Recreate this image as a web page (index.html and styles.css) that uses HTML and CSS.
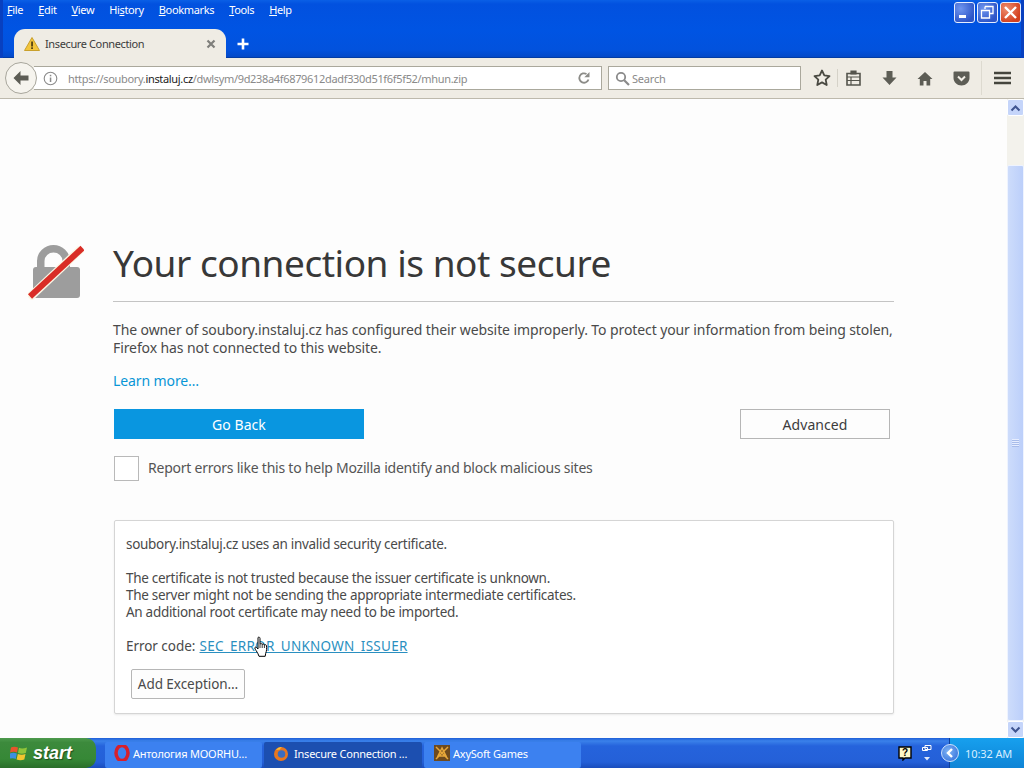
FILE: index.html
```html
<!DOCTYPE html>
<html lang="en">
<head>
<meta charset="utf-8">
<title>Insecure Connection</title>
<link rel="stylesheet" href="styles.css">
</head>
<body>
<div class="screen">
  <header class="titlebar">
    <div class="menu-row">
      <nav class="menus">
        <span><u>F</u>ile</span><span><u>E</u>dit</span><span><u>V</u>iew</span><span>Hi<u>s</u>tory</span><span><u>B</u>ookmarks</span><span><u>T</u>ools</span><span><u>H</u>elp</span>
      </nav>
      <div class="winbtns">
        <div class="winbtn"><svg width="21" height="21" viewBox="0 0 21 21"><rect x="5" y="13" width="7" height="3" fill="#fff"/></svg></div>
        <div class="winbtn"><svg width="21" height="21" viewBox="0 0 21 21"><path d="M8 4.500h8v7h-3M4.500 8.500h8v7.500h-8z M8 7V4.500" fill="none" stroke="#fff" stroke-width="1.300"/></svg></div>
        <div class="winbtn close"><svg width="21" height="21" viewBox="0 0 21 21"><path d="M5 5l11 11M16 5L5 16" stroke="#fff" stroke-width="2.400"/></svg></div>
      </div>
    </div>
    <div class="tab-row">
      <div class="tab">
        <svg class="warn" width="16" height="14" viewBox="0 0 16 14"><path d="M8 .5L15.500 13.500H.5z" fill="#f2c53d" stroke="#c9a02c"/><rect x="7.200" y="4.500" width="1.700" height="5" fill="#4a3a10"/><rect x="7.200" y="10.300" width="1.700" height="1.700" fill="#4a3a10"/></svg>
        <span class="tab-title">Insecure Connection</span>
        <svg class="tab-x" width="10" height="10" viewBox="0 0 10 10"><path d="M1.500 1.500l7 7M8.500 1.500l-7 7" stroke="#7f7f7b" stroke-width="2.200"/></svg>
      </div>
      <svg class="newtab" width="12" height="12" viewBox="0 0 12 12"><path d="M6 .5v11M.5 6h11" stroke="#fff" stroke-width="2.600"/></svg>
    </div>
  </header>

  <div class="toolbar">
    <div class="back"><svg width="18" height="16" viewBox="0 0 18 16"><path d="M8.500 1L1.500 8l7 7V10.500h8v-5h-8z" fill="#5d5d55"/></svg></div>
    <div class="urlbar">
      <svg class="info" width="15" height="15" viewBox="0 0 15 15"><circle cx="7.500" cy="7.500" r="6.300" fill="none" stroke="#8a8a8a" stroke-width="1.100"/><rect x="6.800" y="6.500" width="1.500" height="4.500" fill="#8a8a8a"/><rect x="6.800" y="3.800" width="1.500" height="1.500" fill="#8a8a8a"/></svg>
      <div class="url"><span class="dim">https://soubory.</span>instaluj.cz<span class="dim">/dwlsym/9d238a4f6879612dadf330d51f6f5f52/mhun.zip</span></div>
      <div class="reload"><svg width="14" height="14" viewBox="0 0 14 14"><path d="M11.500 8.500A4.700 4.700 0 1 1 9.500 3" fill="none" stroke="#8c8c88" stroke-width="1.800"/><path d="M12.500 1v5.200H7.300z" fill="#8c8c88"/></svg></div>
    </div>
    <div class="searchbar">
      <svg width="15" height="15" viewBox="0 0 15 15"><circle cx="6" cy="6" r="4.200" fill="none" stroke="#8a8a8a" stroke-width="1.800"/><path d="M9.200 9.200l4.800 4.800" stroke="#8a8a8a" stroke-width="2.200"/></svg>
      <span>Search</span>
    </div>
    <div class="tools">
      <div class="star-wrap"><svg width="18" height="17" viewBox="0 0 18 17"><path d="M9 1.500l2.300 4.900 5.200.7-3.800 3.600 1 5.300L9 13.400 4.300 16l1-5.300L1.500 7.100l5.200-.7z" fill="none" stroke="#4a4a42" stroke-width="1.800" stroke-linejoin="round"/></svg></div>
      <div class="tool first"><svg width="15" height="16" viewBox="0 0 15 16"><path d="M1 3.500h13v11.500H1z" fill="none" stroke="#55554d" stroke-width="1.600"/><path d="M5 1h5v3H5zM1 7h13M1 10.500h13M5 7v8" fill="#55554d" stroke="#55554d" stroke-width="1.200"/></svg></div>
      <div class="tool"><svg width="15" height="16" viewBox="0 0 15 16"><path d="M4.500 1h6v6.500h4L7.500 15 .5 7.500h4z" fill="#5d5d55"/></svg></div>
      <div class="tool"><svg width="16" height="15" viewBox="0 0 16 15"><path d="M8 1L.5 8h2.300v6.500h3.700V10h3v4.500h3.700V8h2.300z" fill="#5d5d55"/></svg></div>
      <div class="tool"><svg width="17" height="15" viewBox="0 0 17 15"><path d="M1.500.5h14A1 1 0 0 1 16.500 1.500v5.500c0 4-3.700 7.500-8 7.500s-8-3.500-8-7.500V1.500A1 1 0 0 1 1.500.5z" fill="#5d5d55"/><path d="M5 5.500l3.500 3.500L12 5.500" fill="none" stroke="#f1eee6" stroke-width="2"/></svg></div>
      <div class="tool hamburger"><svg width="17" height="14" viewBox="0 0 17 14"><path d="M0 2h17M0 7h17M0 12h17" stroke="#45453d" stroke-width="2.500"/></svg></div>
    </div>
  </div>

  <div class="viewport">
    <main class="page">
      <div class="error">
        <svg class="lock" width="56" height="56" viewBox="0 0 56 56"><path d="M9 26v-9a16.500 16 0 0 1 33 0v9h-7.500v-9a9 8.500 0 0 0-18 0v9z" fill="#9d9d9d"/><rect x="5" y="23" width="47" height="31" rx="3" fill="#9d9d9d"/><path d="M1 54L53 5" stroke="#fbf6e4" stroke-width="8.500"/><path d="M2 52.500L54.500 4" stroke="#d92d26" stroke-width="6"/></svg>
        <div class="body">
          <h1>Your connection is not secure</h1>
          <p class="desc">The owner of soubory.instaluj.cz has configured their website improperly. To protect your information from being stolen, Firefox has not connected to this website.</p>
          <a class="learn">Learn more…</a>
          <div class="actions">
            <button class="primary">Go Back</button>
            <button class="secondary">Advanced</button>
          </div>
          <label class="report"><span class="check"></span><span class="report-text">Report errors like this to help Mozilla identify and block malicious sites</span></label>
          <section class="details">
            <p class="d1">soubory.instaluj.cz uses an invalid security certificate.</p>
            <p class="d2">The certificate is not trusted because the issuer certificate is unknown.<br>The server might not be sending the appropriate intermediate certificates.<br>An additional root certificate may need to be imported.</p>
            <p class="d3"><span class="code-label">Error code:</span> <span class="code-wrap"><a class="code">SEC_ERROR_UNKNOWN_ISSUER</a><svg class="cursor" width="15" height="22" viewBox="0 0 15 22"><path d="M4 1.500c1-.8 2-.2 2 1V8c.8-.5 1.800-.5 2.200.3.800-.5 1.800-.3 2.200.5.800-.4 2-.1 2.100 1 .3 2.500.2 5-.8 7.500l-.5 3H5l-1-2.500C3 15.500 1 13.500.8 12c0-.8 1-1.200 1.700-.5L4 13z" fill="#fff" stroke="#000" stroke-width="1"/><path d="M6 8v4M8.200 8.300V12M10.400 8.800V12" stroke="#000" stroke-width=".8"/></svg></span></p>
            <button class="exception">Add Exception…</button>
          </section>
        </div>
      </div>
    </main>
    <aside class="scrollbar">
      <div class="sb-btn"><svg width="11" height="8" viewBox="0 0 11 8"><path d="M1.500 6.500l4-4 4 4" fill="none" stroke="#3e5490" stroke-width="2"/></svg></div>
      <div class="sb-track"></div>
      <div class="sb-thumb"><div class="grip"></div></div>
      <div class="sb-btn"><svg width="11" height="8" viewBox="0 0 11 8"><path d="M1.500 1.500l4 4 4-4" fill="none" stroke="#3e5490" stroke-width="2"/></svg></div>
    </aside>
  </div>

  <footer class="taskbar">
    <div class="start">
      <svg width="18" height="18" viewBox="0 0 18 18"><path d="M1 3.500q3-1.500 7 0l-1 5q-3-1.500-7 0z" fill="#e8542c"/><path d="M9 3.800q3 1.500 8-.3l-1.200 5.500q-4 1.500-7.800 0z" fill="#8fc43a"/><path d="M0 9.500q3-1.500 6.800 0l-1 5.500q-3-1.500-7 0z" fill="#3d8fe0"/><path d="M7.800 10q4 1.500 7.700 0l-1.200 5.500q-4 1.500-7.700 0z" fill="#f3c52f"/></svg>
      <span>start</span>
    </div>
    <div class="task">
      <svg width="16" height="16" viewBox="0 0 16 16"><ellipse cx="8" cy="8" rx="6" ry="7.500" fill="none" stroke="#d6202c" stroke-width="3.500"/></svg>
      <span>Антология MOORHU…</span>
    </div>
    <div class="task active">
      <svg width="16" height="16" viewBox="0 0 16 16"><circle cx="8" cy="8" r="7" fill="#e8761f"/><circle cx="8.500" cy="8" r="3.800" fill="#3a6cc0"/><path d="M3 4q2-3 6-3-2 1-2 2.500z" fill="#f6c13a"/></svg>
      <span>Insecure Connection …</span>
    </div>
    <div class="task">
      <svg width="16" height="16" viewBox="0 0 16 16"><rect width="16" height="16" fill="#6e4a1e"/><path d="M2 2l12 12M14 2L2 14M8 3l-4 8h8z" fill="none" stroke="#e8a83a" stroke-width="1.500"/></svg>
      <span>AxySoft Games</span>
    </div>
    <div class="tb-tray-left">
      <svg class="help" width="14" height="15" viewBox="0 0 14 15"><path d="M1 1h12v11H7l-2 2v-2H1z" fill="#fdf8c8" stroke="#000" stroke-width="1.400"/><text x="7" y="10" class="help-q">?</text></svg>
      <svg class="net" width="12" height="18" viewBox="0 0 12 18"><path d="M4 1.500h6v4h-6zM1.500 3.500h5v3h-5z" fill="#2a5fc8" stroke="#fff" stroke-width="1"/><path d="M3 13h6l-3 3.500z" fill="#dfe9fa"/></svg>
    </div>
    <div class="tray">
      <div class="tray-btn"><svg width="10" height="10" viewBox="0 0 10 10"><path d="M7 1L3 5l4 4" fill="none" stroke="#fff" stroke-width="2.400"/></svg></div>
      <span class="clock">10:32 AM</span>
    </div>
  </footer>
</div>
</body>
</html>
```
FILE: styles.css
```css
* { box-sizing: border-box; }
html, body { margin: 0; padding: 0; }
body { width: 1024px; height: 768px; overflow: hidden; font-family: "Noto Sans", "Open Sans", sans-serif; background: #fff; }
.screen { width: 1024px; height: 768px; display: flex; flex-direction: column; }

.titlebar { height: 58px; background: linear-gradient(180deg, #0a5fe6 0, #0251df 4px, #0054e3 30px, #0252dd 50px, #0349c8 57px, #022f80 58px); border-left: 3px solid #0840c0; border-right: 3px solid #0840c0; display: flex; flex-direction: column; }
.menu-row { height: 29px; display: flex; justify-content: space-between; align-items: flex-start; }
.menus { display: flex; gap: 15px; padding: 2px 0 0 4px; font-size: 11px; line-height: 15px; color: #fff; letter-spacing: -.35px; }
.winbtns { display: flex; gap: 2px; padding: 2px 0 0; }
.winbtn { width: 21px; height: 21px; border: 1px solid #e6eeff; border-radius: 3px; background: radial-gradient(circle at 30% 30%, #6f95ee, #2d55c8 75%); display: flex; align-items: center; justify-content: center; }
.winbtn svg { flex: none; }
.winbtn.close { background: radial-gradient(circle at 30% 30%, #ee8e70, #d3401e 75%); }
.tab-row { height: 29px; display: flex; align-items: center; padding-left: 11px; }
.tab { width: 212px; height: 29px; background: #efece4; border-radius: 11px 11px 0 0; display: flex; align-items: center; padding: 0 0 0 10px; color: #3c3c3c; font-size: 11px; letter-spacing: -.38px; }
.warn { flex: none; }
.tab-title { margin-left: 5px; flex: 1; }
.tab-x { flex: none; margin-right: 10px; }
.newtab { margin-left: 11px; }

.toolbar { height: 41px; background: #efece4; border-bottom: 1px solid #bdb9ac; display: flex; align-items: center; padding: 0 0 0 5px; }
.back { width: 32px; height: 32px; flex: none; border-radius: 50%; border: 1px solid #a8a69c; background: #f6f4ee; display: flex; align-items: center; justify-content: center; position: relative; z-index: 1; }
.urlbar { width: 568px; height: 24px; margin-left: -3px; background: #fff; border: 1px solid #aaa89c; border-left: 0; display: flex; align-items: center; padding-left: 9px; }
.info { flex: none; }
.url { margin-left: 10px; font-size: 11px; letter-spacing: -.33px; color: #222; white-space: nowrap; flex: 1; overflow: hidden; }
.url .dim { color: #8a8a8a; }
.reload { width: 34px; height: 22px; flex: none; display: flex; align-items: center; justify-content: center; }
.searchbar { width: 193px; height: 24px; margin-left: 6px; background: #fff; border: 1px solid #aaa89c; display: flex; align-items: center; gap: 2px; padding-left: 6px; font-size: 11px; color: #8a8a8a; letter-spacing: -.2px; }
.tools { flex: 1; display: flex; align-items: center; padding-left: 12px; }
.star-wrap { width: 25px; height: 18px; display: flex; justify-content: flex-start; border-right: 1px solid #d5d2c8; }
.tool { width: 36px; display: flex; justify-content: center; }
.tool.first { width: 31px; margin-right: 2px; }
.hamburger { margin-left: 2px; padding-left: 12px; width: 40px; border-left: 1px solid #dddad0; height: 34px; align-items: center; justify-content: flex-start; }

.viewport { flex: 1; min-height: 0; display: flex; background: #fff; }
.page { flex: 1; min-width: 0; background: #fdfdfd; padding: 139px 0 0 28px; color: #3c3c3c; }
.error { display: flex; align-items: flex-start; }
.lock { flex: none; margin-top: 6px; }
.body { width: 781px; margin-left: 29px; }
h1 { margin: 0; height: 64px; font-weight: 400; font-size: 37px; line-height: 50px; color: #383838; letter-spacing: -.46px; border-bottom: 1px solid #c4c4c4; white-space: nowrap; }
.desc { margin: 19px 0 0; font-size: 14px; line-height: 18px; letter-spacing: -.1px; color: #4a4a4a; }
.learn { display: block; margin-top: 15px; font-size: 14px; line-height: 18px; color: #0996d6; letter-spacing: -.1px; }
.actions { display: flex; justify-content: space-between; padding: 0 4px 0 1px; margin-top: 19px; }
button { font-family: inherit; margin: 0; }
.primary { width: 250px; height: 30px; border: 0; background: #0996e0; color: #fff; font-size: 14px; letter-spacing: .05px; }
.secondary { width: 150px; height: 30px; border: 1px solid #b6b6b6; background: #fdfdfd; color: #3c3c3c; font-size: 14px; letter-spacing: .05px; }
.report { display: flex; align-items: center; gap: 9px; margin-top: 17px; padding-left: 1px; font-size: 14px; letter-spacing: -.23px; color: #555; }
.report-text { padding-bottom: 2px; }
.check { width: 25px; height: 25px; border: 1px solid #b9b9b9; background: #fff; flex: none; }
.details { margin: 39px 0 0 1px; height: 194px; background: #fff; border: 1px solid #d5d5d5; border-radius: 2px; box-shadow: 0 1px 2px rgba(0,0,0,.08); padding: 15px 11px 14px; font-size: 13.500px; line-height: 17px; letter-spacing: -.29px; color: #4a4a4a; }
.details p { margin: 0; }
.details .d2 { margin-top: 17px; }
.details .d3 { margin-top: 17px; }
.code-label { letter-spacing: -.05px; }
.code-wrap { position: relative; margin-left: 1px; }
.code { color: #2a8fc0; text-decoration: underline; letter-spacing: .26px; }
.cursor { position: absolute; left: 54px; top: -1px; }
.exception { display: block; margin: 14px 0 0 5px; width: 114px; height: 30px; padding: 0; background: #fdfdfd; border: 1px solid #b6b6b6; border-radius: 2px; font-size: 13.500px; letter-spacing: -.05px; color: #4a4a4a; }

.scrollbar { width: 17px; flex: none; display: flex; flex-direction: column; background: #f3f2ec; }
.sb-btn { height: 17px; flex: none; background: #c5d5fa; border: 1px solid #fff; border-radius: 2px; display: flex; align-items: center; justify-content: center; }
.sb-track { height: 49px; flex: none; }
.sb-thumb { flex: 1; background: linear-gradient(90deg, #cddcfb, #bccffa); border: 1px solid #eef3ff; border-radius: 2px; display: flex; align-items: center; justify-content: center; }
.grip { width: 7px; height: 8px; background: repeating-linear-gradient(180deg, #e6edff 0 1px, #a8bcea 1px 2px); }

.taskbar { height: 30px; flex: none; background: linear-gradient(180deg, #1f5fd8 0, #3a81ea 3px, #2563dc 8px, #2460d8 24px, #1a4dbc 30px); display: flex; align-items: center; color: #fff; }
.start { width: 96px; height: 30px; flex: none; background: linear-gradient(180deg, #4d9a4d 0, #3c8a3c 15%, #368836 70%, #2a6e2a 100%); border-radius: 0 10px 10px 0; display: flex; align-items: center; gap: 5px; padding-left: 10px; font-family: "Liberation Sans", sans-serif; font-style: italic; font-weight: 700; font-size: 18px; text-shadow: 1px 1px 1px #1d4d1d; }
.task { width: 157px; height: 26px; margin: 4px 0 0 8px; flex: none; background: #3c81f0; border-radius: 2px; display: flex; align-items: center; gap: 3px; padding: 0 0 4px 9px; font-size: 11px; letter-spacing: -.22px; white-space: nowrap; }
.start + .task { margin-left: 9px; }
.task.active { background: #1c4fb0; margin-left: 2px; width: 158px; gap: 5px; padding-bottom: 3px; }
.task.active + .task { margin-left: 2px; padding-left: 10px; }
.tb-tray-left { flex: 1; display: flex; justify-content: flex-end; align-items: center; gap: 9px; padding-right: 16px; }
.help-q { font-family: "Liberation Sans", sans-serif; font-weight: 700; font-size: 10px; text-anchor: middle; fill: #000; }
.tray { width: 75px; height: 30px; flex: none; background: linear-gradient(180deg, #17a0ee 0, #1292e2 50%, #0f84d6 100%); border-left: 1px solid #0d3f9a; display: flex; align-items: center; font-size: 11px; }
.tray-btn { width: 18px; height: 18px; margin-left: -9px; flex: none; border-radius: 50%; background: radial-gradient(circle at 40% 40%, #7fb4f5, #2a68d8); border: 1px solid #cfe2fb; display: flex; align-items: center; justify-content: center; }
.clock { margin-left: 6px; letter-spacing: -.1px; white-space: nowrap; color: #d8eeff; }
```
